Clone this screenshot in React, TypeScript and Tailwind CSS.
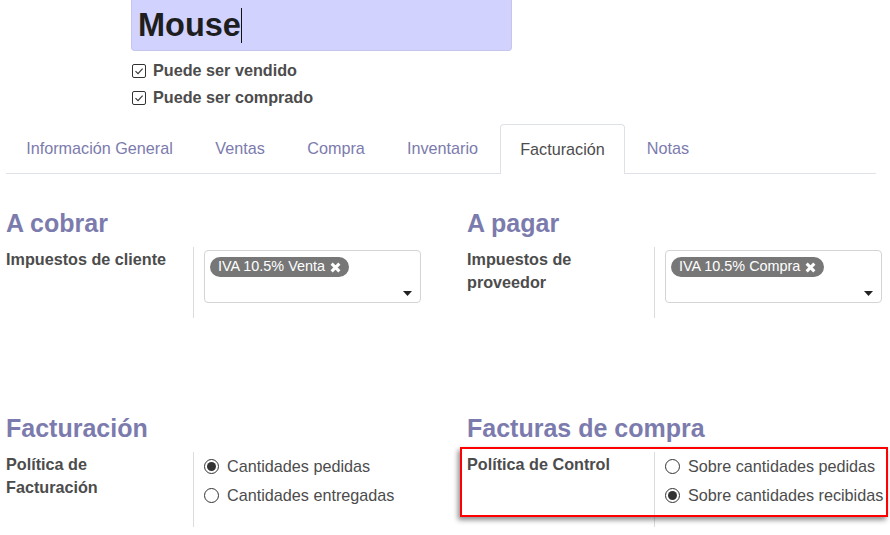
import React from 'react';

interface Tab {
  label: string;
  w: string;
  active?: boolean;
}

const tabs: Tab[] = [
  { label: 'Información General', w: 'w-[187px]' },
  { label: 'Ventas', w: 'w-[90px]' },
  { label: 'Compra', w: 'w-[98px]' },
  { label: 'Inventario', w: 'w-[111px]' },
  { label: 'Facturación', w: 'w-[125px]', active: true },
  { label: 'Notas', w: 'w-[82px]' },
];

const CheckBox = ({ label }: { label: string }) => (
  <div className="flex items-center h-[27px] ml-[132px] gap-[7px]">
    <span className="w-[14px] h-[14px] border border-[#333] rounded-[2px] flex items-center justify-center bg-white">
      <svg width="10" height="10" viewBox="0 0 10 10">
        <path d="M1.5 5.2 L4 7.6 L8.6 2.6" fill="none" stroke="#333" strokeWidth="1.1" />
      </svg>
    </span>
    <span className="text-[16.2px] font-bold text-[#4c4c4c]">{label}</span>
  </div>
);

const Radio = ({ label, checked }: { label: string; checked?: boolean }) => (
  <div className="flex items-center h-[29px] gap-[8px]">
    <span className="w-[15px] h-[15px] rounded-full border border-[#333] flex items-center justify-center bg-white">
      {checked && <span className="w-[9px] h-[9px] rounded-full bg-[#333]" />}
    </span>
    <span className="text-[16.2px] text-[#4c4c4c]">{label}</span>
  </div>
);

const TagInput = ({ tag }: { tag: string }) => (
  <div className="w-[217px] h-[53px] mt-[3px] border border-[#d4d4d4] rounded-[4px] pl-[5px] pr-[8px] pt-[6px] pb-[6px] flex flex-col justify-between">
    <span className="self-start inline-flex items-center h-[20px] rounded-full bg-[#777] text-white text-[14.4px] pl-[8px] pr-[8px] gap-[5px]">
      {tag}
      <svg width="11" height="11" viewBox="0 0 10 10">
        <path d="M1.5 1.5 L8.5 8.5 M8.5 1.5 L1.5 8.5" stroke="#fff" strokeWidth="2.8" />
      </svg>
    </span>
    <svg className="self-end" width="9" height="5" viewBox="0 0 9 5">
      <polygon points="0,0 9,0 4.5,5" fill="#222" />
    </svg>
  </div>
);

const Section = ({ title, label, rowH, children }: { title: string; label: string; rowH: string; children: React.ReactNode }) => (
  <div>
    <h2 className="h-[30px] leading-[30px] text-[25px] font-bold text-[#7c7bad]">{title}</h2>
    <div className={`flex mt-[9px] ${rowH}`}>
      <div className="w-[187px] pr-[16px] pt-[1px] text-[16.2px] leading-[23px] font-bold text-[#4c4c4c]">{label}</div>
      <div className="border-l border-[#dcdcdc] pl-[10px]">{children}</div>
    </div>
  </div>
);

export default function App() {
  return (
    <div className="relative w-[890px] h-[535px] overflow-hidden bg-white text-[#4c4c4c]" style={{ fontFamily: '"Liberation Sans", Arial, sans-serif' }}>
      <div className="ml-[131px] w-[381px] h-[51px] bg-[#d2d2ff] rounded-b-[4px] border border-t-0 border-[#c6c6ec] flex items-center pl-[6px]">
        <span className="text-[32.5px] leading-[33px] font-bold text-[#1e1e1e]">Mouse</span>
        <span className="inline-block w-px h-[35px] bg-[#111]" />
      </div>

      <div className="pt-[6px]">
        <CheckBox label="Puede ser vendido" />
        <CheckBox label="Puede ser comprado" />
      </div>

      <div className="mt-[13px] ml-[6px] w-[870px] h-[50px] flex items-end gap-[2px] border-b border-[#dee2e6]">
        {tabs.map((t) =>
          t.active ? (
            <div key={t.label} className={`${t.w} h-[50px] -mb-px flex items-center justify-center bg-white border border-b-0 border-[#dee2e6] rounded-t-[4px] text-[16.2px] text-[#4c4c4c]`}>
              {t.label}
            </div>
          ) : (
            <div key={t.label} className={`${t.w} h-[49px] flex items-center justify-center text-[16.2px] text-[#7c7bad]`}>
              {t.label}
            </div>
          )
        )}
      </div>

      <div className="ml-[6px] mt-[34px] grid grid-cols-[461px_1fr]">
        <Section title="A cobrar" label="Impuestos de cliente" rowH="h-[71px]">
          <TagInput tag="IVA 10.5% Venta" />
        </Section>
        <Section title="A pagar" label="Impuestos de proveedor" rowH="h-[71px]">
          <TagInput tag="IVA 10.5% Compra" />
        </Section>
      </div>

      <div className="ml-[6px] mt-[95px] grid grid-cols-[461px_1fr]">
        <Section title="Facturación" label="Política de Facturación" rowH="h-[75px]">
          <Radio label="Cantidades pedidas" checked />
          <Radio label="Cantidades entregadas" />
        </Section>
        <Section title="Facturas de compra" label="Política de Control" rowH="h-[75px]">
          <Radio label="Sobre cantidades pedidas" />
          <Radio label="Sobre cantidades recibidas" checked />
        </Section>
      </div>

      <div className="absolute left-[460px] top-[447px] w-[428px] h-[70px] border-2 border-[#ff0000] shadow-[-2px_3px_5px_rgba(0,0,0,0.45)]" />
    </div>
  );
}
